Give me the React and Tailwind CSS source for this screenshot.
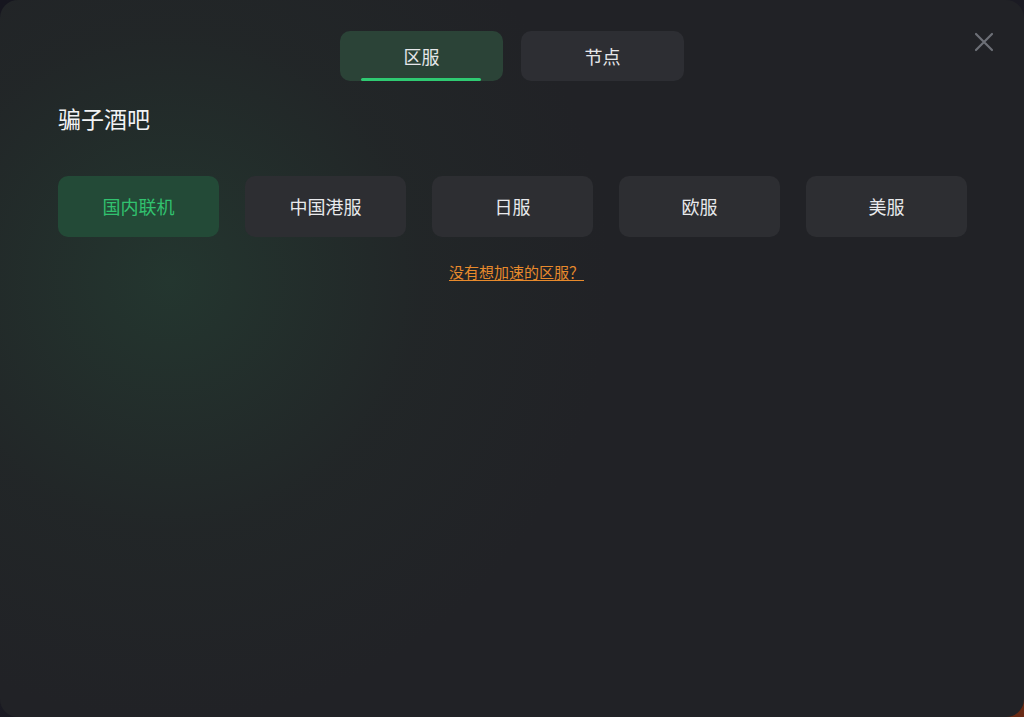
import { useState } from 'react';

const REGIONS = ['国内联机', '中国港服', '日服', '欧服', '美服'];

const font = "font-['Microsoft_YaHei','Noto_Sans_CJK_SC',sans-serif]";

export default function App() {
  const [tab, setTab] = useState('区服');
  const [region, setRegion] = useState('国内联机');

  return (
    <div className={`h-[717px] w-[1024px] bg-[linear-gradient(135deg,#16161f_0%,#1c1c24_70%,#6a2a14_100%)] ${font}`}>
      <div className="relative h-full w-full overflow-hidden rounded-[18px] bg-[#212226] bg-[radial-gradient(circle_at_170px_280px,rgba(38,74,56,0.5)_0%,rgba(36,50,44,0.25)_250px,rgba(33,34,38,0)_440px)]">
        <button className="absolute right-[30px] top-[32px] text-[#6d7077]">
          <svg width="20" height="20" viewBox="0 0 20 20" fill="none" stroke="currentColor" strokeWidth="2.2" strokeLinecap="round">
            <path d="M2 2 L18 18 M18 2 L2 18" />
          </svg>
        </button>

        <div className="flex justify-center gap-[18px] pt-[31px]">
          {['区服', '节点'].map((t) => (
            <button
              key={t}
              onClick={() => setTab(t)}
              className={`relative flex h-[50px] w-[163px] items-center justify-center rounded-[10px] text-[18px] text-[#e6e7ea] ${
                tab === t ? 'bg-[#2b4337]' : 'bg-[#2d2e33]'
              }`}
            >
              {t}
              {tab === t && (
                <span className="absolute bottom-0 left-[21px] h-[3px] w-[120px] rounded-full bg-[#2fca72]" />
              )}
            </button>
          ))}
        </div>

        <div className="px-[58px]">
          <h2 className="mt-[21px] text-[23px] leading-[32px] text-[#f2f3f5]">骗子酒吧</h2>

          <div className="mt-[42px] grid w-[909px] grid-cols-5 gap-[26px]">
            {REGIONS.map((r) => (
              <button
                key={r}
                onClick={() => setRegion(r)}
                className={`h-[61px] rounded-[10px] text-[18px] ${
                  region === r ? 'bg-[#234a37] text-[#31c26f]' : 'bg-[#2d2e32] text-[#e8e9ec]'
                }`}
              >
                {r}
              </button>
            ))}
          </div>

          <div className="mt-[24px] flex w-[909px] justify-center pl-[8px]">
            <a href="#" className="text-[15px] leading-[22px] text-[#e88a2c] underline underline-offset-2">
              没有想加速的区服？
            </a>
          </div>
        </div>
      </div>
    </div>
  );
}
